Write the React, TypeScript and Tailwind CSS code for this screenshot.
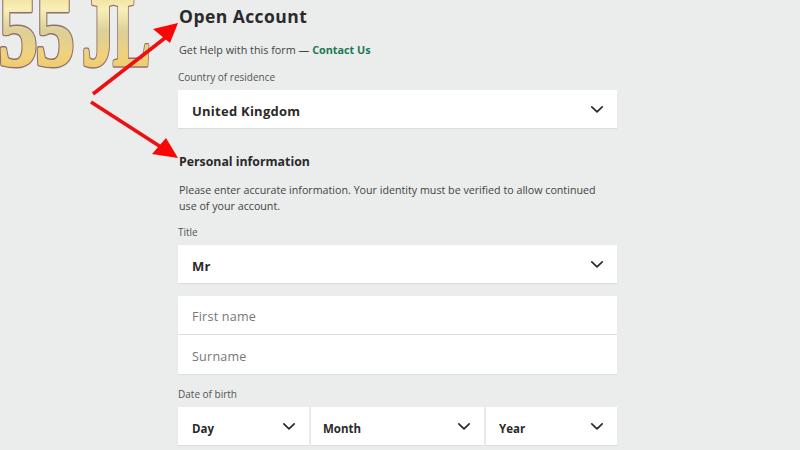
import React from "react";

function Chevron() {
  return (
    <svg width="14" height="9" viewBox="0 0 14 9" fill="none" className="shrink-0">
      <path d="M1.8 1.8 L7 6.8 L12.2 1.8" stroke="#2a2a2a" strokeWidth="1.7" strokeLinecap="round" strokeLinejoin="round" />
    </svg>
  );
}

function Select({ label, className, textClass }: { label: string; className: string; textClass: string }) {
  return (
    <div className={`flex h-[38px] items-center justify-between bg-white shadow-[0_1px_1px_rgba(0,0,0,0.06)] ${className}`}>
      <span className={`pt-[5px] font-bold text-[#2a2a2a] ${textClass}`}>{label}</span>
      <Chevron />
    </div>
  );
}

function Logo() {
  const glyphs: [string, number, number][] = [
    ["5", -1.5, 0.78],
    ["5", 35.5, 0.78],
    ["J", 82, 0.66],
    ["L", 113, 0.56],
  ];
  return (
    <svg width="152" height="72" viewBox="0 0 152 72" className="absolute left-0 top-0">
      <defs>
        <linearGradient id="gold" x1="0" y1="0" x2="0" y2="1">
          <stop offset="0" stopColor="#e6c872" />
          <stop offset="0.3" stopColor="#f8f0b8" />
          <stop offset="0.5" stopColor="#dccf98" />
          <stop offset="0.72" stopColor="#f0d27c" />
          <stop offset="1" stopColor="#ecc060" />
        </linearGradient>
        <g id="logo-glyphs" fontFamily="'Liberation Serif', serif" fontWeight="700" fontSize="100">
          {glyphs.map(([c, x, s], i) => (
            <text key={i} transform={`translate(${x} 65) scale(${s} 1)`}>
              {c}
            </text>
          ))}
        </g>
      </defs>
      <use href="#logo-glyphs" fill="#94706c" stroke="#94706c" strokeWidth="5" strokeLinejoin="round" />
      <use href="#logo-glyphs" fill="url(#gold)" stroke="url(#gold)" strokeWidth="2.2" strokeLinejoin="round" />
    </svg>
  );
}

function Arrows() {
  return (
    <svg width="200" height="170" viewBox="0 0 200 170" className="absolute left-0 top-0">
      <path d="M93 94 L165 38" stroke="#ee1010" strokeWidth="3.6" />
      <path d="M178 23 L153 29 L170 43 Z" fill="#fa0606" />
      <path d="M91 102 L164 149" stroke="#ee1010" strokeWidth="3.6" />
      <path d="M178 158 L152 154 L166 138 Z" fill="#fa0606" />
    </svg>
  );
}

export default function App() {
  return (
    <div className="relative h-[450px] w-[800px] overflow-hidden bg-[#ebecec] font-['Open_Sans','Noto_Sans',sans-serif] text-[#333]">
      <div className="ml-[178px] w-[439px]">
        <h1 className="pl-px pt-[4px] text-[17.5px] font-bold leading-[24px] tracking-[0.45px] text-[#2a2a2a]">Open Account</h1>
        <p className="mt-[14px] pl-px text-[10.8px] leading-[16px] text-[#444]">
          Get Help with this form — <span className="font-bold text-[#1b7a55]">Contact Us</span>
        </p>
        <p className="mt-[12px] text-[10px] leading-[14px] text-[#555]">Country of residence</p>
        <Select label="United Kingdom" textClass="text-[13px] tracking-[0.25px]" className="mt-[6px] pl-[14px] pr-[13px]" />
        <h2 className="mt-[25px] pl-px text-[12.3px] font-bold leading-[18px] text-[#2a2a2a]">Personal information</h2>
        <p className="mt-[11px] pl-px pr-[15px] text-[10.7px] leading-[16px] text-[#444]">
          Please enter accurate information. Your identity must be verified to allow continued use of your account.
        </p>
        <p className="mt-[11px] text-[10px] leading-[14px] text-[#555]">Title</p>
        <Select label="Mr" textClass="text-[13px] tracking-[0.25px]" className="mt-[6px] pl-[14px] pr-[13px]" />
        <div className="mt-[13px] bg-white shadow-[0_1px_1px_rgba(0,0,0,0.06)]">
          <div className="flex h-[39px] items-center border-b border-[#dcdddd] pl-[14px] pt-[5px] text-[12.6px] tracking-[0.2px] text-[#777]">First name</div>
          <div className="flex h-[39px] items-center pl-[14px] pt-[5px] text-[12.6px] tracking-[0.2px] text-[#777]">Surname</div>
        </div>
        <p className="mt-[13px] text-[10px] leading-[14px] text-[#555]">Date of birth</p>
        <div className="mt-[6px] flex gap-[2px]">
          <Select label="Day" textClass="text-[11.5px]" className="w-[131px] pl-[14px] pr-[13px]" />
          <Select label="Month" textClass="text-[11.5px]" className="w-[173px] pl-[12px] pr-[13px]" />
          <Select label="Year" textClass="text-[11.5px]" className="w-[131px] pl-[13px] pr-[13px]" />
        </div>
      </div>
      <Logo />
      <Arrows />
    </div>
  );
}
